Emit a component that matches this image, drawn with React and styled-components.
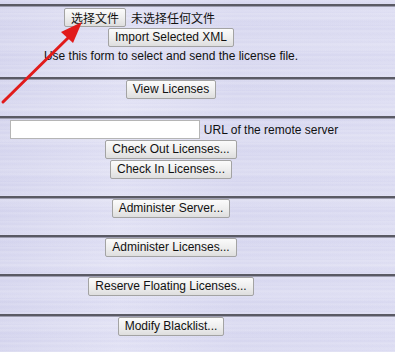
import React from 'react';
import styled, { createGlobalStyle } from 'styled-components';

const GlobalStyle = createGlobalStyle`
  html, body {
    margin: 0;
    padding: 0;
  }
  body {
    width: 395px;
    height: 352px;
    overflow: hidden;
    font-family: "Liberation Sans", Arial, "Noto Sans CJK SC", sans-serif;
    font-size: 12px;
    color: #111;
    background-color: #d8d8f0;
    background-image:
      repeating-linear-gradient(180deg,
        rgba(255,255,255,0.12) 0px, rgba(255,255,255,0.03) 2px,
        rgba(170,170,210,0.07) 3px, rgba(255,255,255,0.15) 5px,
        rgba(190,190,225,0.05) 8px, rgba(255,255,255,0.08) 11px,
        rgba(180,180,220,0.06) 13px),
      repeating-linear-gradient(180deg,
        rgba(255,255,255,0) 0px, rgba(255,255,255,0.12) 17px,
        rgba(200,200,235,0.06) 23px, rgba(255,255,255,0) 31px),
      linear-gradient(90deg, #d5d5ee 0%, #e0e0f4 30%, #d8d8f0 60%, #dcdcf2 100%);
  }
`;

const Page = styled.div`
  padding-top: 4px;
  position: relative;
`;

const Section = styled.section`
  border-top: 2px solid #5a5a64;
  box-shadow: inset 0 1px 0 #9c9cae;
  height: ${p => p.h}px;
  box-sizing: border-box;
  padding-top: ${p => p.pt || 1}px;
`;

const Column = styled.div`
  width: 342px;
  display: flex;
  flex-direction: column;
  align-items: center;
  gap: ${p => p.gap || 1}px;
`;

const Button = styled.button`
  font-family: "Liberation Sans", Arial, "Noto Sans CJK SC", sans-serif;
  font-size: 12px;
  line-height: 15px;
  color: #111;
  padding: 1px 6px;
  border: 1px solid #a3a3a3;
  border-radius: 2px;
  background: linear-gradient(180deg, #fbfbfb 0%, #ededed 55%, #dedede 100%);
  cursor: pointer;
`;

const FileField = styled.div`
  width: 214px;
  display: flex;
  align-items: center;
  gap: 5px;
`;

const CjkText = styled.span`
  font-family: "Noto Sans CJK SC", sans-serif;
  font-size: 12px;
`;

const FileButton = styled(Button)`
  font-family: "Noto Sans CJK SC", sans-serif;
`;

const Hint = styled.div`
  margin-top: 1px;
  line-height: 14px;
`;

const UrlRow = styled.div`
  display: flex;
  align-items: center;
  gap: 4px;
  margin-left: 6px;
`;

const UrlInput = styled.input`
  width: 186px;
  height: 15px;
  border: 1px solid #b5b5b5;
  padding: 1px;
  background: #fff;
`;

const Arrow = () => (
  <svg width="100" height="110" viewBox="0 0 100 110" style={{ position: 'absolute', left: 0, top: 0 }}>
    <line x1="3" y1="102" x2="70" y2="36" stroke="#e11b1b" strokeWidth="3" strokeLinecap="round" />
    <polygon points="82,22 61,32 73,43" fill="#e11b1b" />
  </svg>
);

export default function App() {
  return (
    <>
      <GlobalStyle />
      <Page>
        <Section h={73} pt={2}>
          <Column gap={1}>
            <FileField>
              <FileButton>选择文件</FileButton>
              <CjkText>未选择任何文件</CjkText>
            </FileField>
            <Button>Import Selected XML</Button>
            <Hint>Use this form to select and send the license file.</Hint>
          </Column>
        </Section>
        <Section h={39}>
          <Column>
            <Button>View Licenses</Button>
          </Column>
        </Section>
        <Section h={80} pt={2}>
          <Column gap={1}>
            <UrlRow>
              <UrlInput />
              <span>URL of the remote server</span>
            </UrlRow>
            <Button>Check Out Licenses...</Button>
            <Button>Check In Licenses...</Button>
          </Column>
        </Section>
        <Section h={39}>
          <Column>
            <Button>Administer Server...</Button>
          </Column>
        </Section>
        <Section h={39}>
          <Column>
            <Button>Administer Licenses...</Button>
          </Column>
        </Section>
        <Section h={40}>
          <Column>
            <Button>Reserve Floating Licenses...</Button>
          </Column>
        </Section>
        <Section h={40}>
          <Column>
            <Button>Modify Blacklist...</Button>
          </Column>
        </Section>
        <Arrow />
      </Page>
    </>
  );
}
